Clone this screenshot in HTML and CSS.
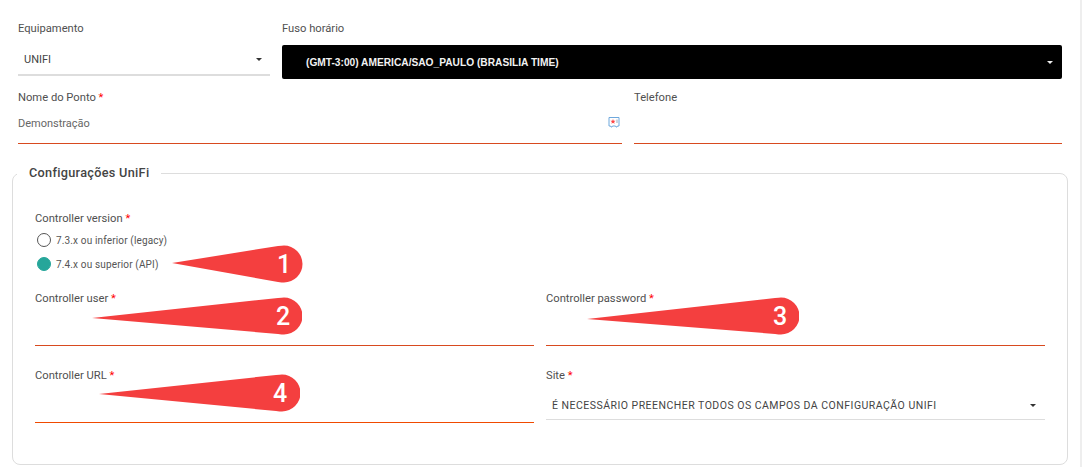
FILE: index.html
```html
<!DOCTYPE html>
<html lang="pt-BR">
<head>
    <meta charset="UTF-8">
    <title>Configurações UniFi</title>
    <link rel="stylesheet" href="styles.css">
</head>
<body>
    <div class="page">
        <div class="row row-top">
            <div class="field field-equip">
                <label>Equipamento</label>
                <div class="select">
                    <span>UNIFI</span>
                    <i class="caret"></i>
                </div>
            </div>
            <div class="field field-grow">
                <label>Fuso horário</label>
                <div class="select-dark">
                    <span>(GMT-3:00) AMERICA/SAO_PAULO (BRASILIA TIME)</span>
                    <i class="caret caret-white"></i>
                </div>
            </div>
        </div>

        <div class="row row-name">
            <div class="field field-name">
                <label>Nome do Ponto <b>*</b></label>
                <div class="input">
                    <span>Demonstração</span>
                    <svg class="card-icon" width="12" height="12" viewBox="0 0 12 12">
                        <path d="M1 1.5h10v8.5H9.5L9 11H8L7.5 10h-3L4 11H3L2.5 10H1z" fill="none" stroke="#6fa8dc" stroke-width="1"/>
                        <path d="M5 3l.7 1.7 1.8.1-1.4 1.2.5 1.8L5 6.8 3.4 7.8 3.9 6 2.5 4.8l1.8-.1z" fill="#f44"/>
                        <path d="M9 3.5v3.5" stroke="#9ab" stroke-width="1"/>
                    </svg>
                </div>
            </div>
            <div class="field field-grow">
                <label>Telefone</label>
                <div class="input"></div>
            </div>
        </div>

        <fieldset class="box">
            <legend>Configurações UniFi</legend>

            <div class="version">
                <label>Controller version <b>*</b></label>
                <div class="radio"><i class="dot"></i>7.3.x ou inferior (legacy)</div>
                <div class="radio"><i class="dot dot-on"></i>7.4.x ou superior (API)</div>
                <svg class="pin pin-1" width="131" height="38" viewBox="0 0 131 38">
                    <path d="M0 18L106 1Q110 .5 112 .5A18.5 18.5 0 0 1 112 37.5Q110 37.5 106 37z" fill="#f43f3f"/>
                    <text x="112" y="28" text-anchor="middle">1</text>
                </svg>
            </div>

            <div class="grid">
                <div class="field">
                    <label>Controller user <b>*</b></label>
                    <div class="input input-box"></div>
                    <svg class="pin pin-2" width="210" height="38" viewBox="0 0 210 38">
                        <path d="M0 21L186 1Q190 .5 192 .5A18.5 18.5 0 0 1 192 37.5Q190 37.5 186 37z" fill="#f43f3f"/>
                        <text x="191" y="28" text-anchor="middle">2</text>
                    </svg>
                </div>
                <div class="field">
                    <label>Controller password <b>*</b></label>
                    <div class="input input-box"></div>
                    <svg class="pin pin-3" width="212" height="38" viewBox="0 0 212 38">
                        <path d="M0 22L188 1Q192 .5 194 .5A18.5 18.5 0 0 1 194 37.5Q192 37.5 188 37z" fill="#f43f3f"/>
                        <text x="193" y="28" text-anchor="middle">3</text>
                    </svg>
                </div>
                <div class="field">
                    <label>Controller URL <b>*</b></label>
                    <div class="input input-box input-url"></div>
                    <svg class="pin pin-4" width="201" height="38" viewBox="0 0 201 38">
                        <path d="M0 20L177 1Q181 .5 183 .5A18.5 18.5 0 0 1 183 37.5Q181 37.5 177 37z" fill="#f43f3f"/>
                        <text x="181" y="28" text-anchor="middle">4</text>
                    </svg>
                </div>
                <div class="field">
                    <label>Site <b>*</b></label>
                    <div class="select select-site">
                        <span>É NECESSÁRIO PREENCHER TODOS OS CAMPOS DA CONFIGURAÇÃO UNIFI</span>
                        <i class="caret"></i>
                    </div>
                </div>
            </div>
        </fieldset>
    </div>
</body>
</html>
```

FILE: styles.css
```css
* {
    margin: 0;
    padding: 0;
    box-sizing: border-box;
}
html, body {
    height: 467px;
    overflow: hidden;
}
body {
    font-family: 'Roboto', 'Liberation Sans', sans-serif;
    background: #eee;
    color: #444;
}
.page {
    width: 1080px;
    height: 467px;
    background: #fff;
    padding: 22px 12px 0 18px;
}
.row {
    display: flex;
    gap: 12px;
}
.row-name {
    margin-top: 12px;
}
.field {
    position: relative;
    display: flex;
    flex-direction: column;
}
.field-equip {
    width: 252px;
}
.field-name {
    width: 604px;
}
.field-grow {
    flex: 1;
    padding-right: 6px;
}
label {
    font-size: 11.2px;
    line-height: 14px;
    color: #505050;
}
label b {
    color: #f00;
    font-weight: 400;
}
.select {
    height: 31px;
    margin-top: 9px;
    padding: 0 8px 0 6px;
    display: flex;
    justify-content: space-between;
    align-items: center;
    border-bottom: 2px solid #ddd;
    font-size: 11px;
    color: #444;
}
.select-dark {
    height: 34px;
    margin-top: 9px;
    padding: 0 9px 0 24px;
    display: flex;
    justify-content: space-between;
    align-items: center;
    background: #000;
    border-radius: 2px;
    color: #f2f2f2;
    font-family: 'Liberation Sans', sans-serif;
    font-size: 10.2px;
    font-weight: 700;
}
.caret {
    width: 0;
    height: 0;
    border-left: 3.5px solid transparent;
    border-right: 3.5px solid transparent;
    border-top: 3.5px solid #333;
}
.caret-white {
    border-top-color: #eee;
}
.input {
    height: 33px;
    margin-top: 6px;
    display: flex;
    justify-content: space-between;
    align-items: flex-start;
    padding-top: 6px;
    border-bottom: 1px solid #d84a1f;
    font-size: 11px;
    color: #666;
}
.card-icon {
    margin-right: 2px;
    margin-top: -1px;
}
.box {
    margin-top: 21px;
    width: 1056px;
    height: 300px;
    margin-left: -6px;
    padding: 0 22px;
    border: 1px solid #ddd;
    border-radius: 8px;
}
.box legend {
    margin-left: -18px;
    padding: 0 12px;
    font-size: 12.7px;
    font-weight: 500;
    line-height: 16px;
    letter-spacing: 0.3px;
    color: #444;
}
.version {
    position: relative;
    margin-top: 31px;
}
.version label {
    display: block;
    margin-bottom: 2px;
}
.radio {
    display: flex;
    align-items: center;
    gap: 5px;
    height: 24px;
    padding-left: 2px;
    font-size: 10px;
    letter-spacing: 0.15px;
    color: #555;
}
.dot {
    width: 14px;
    height: 14px;
    border: 1px solid #555;
    border-radius: 50%;
}
.dot-on {
    background: #26a69a;
    border-color: #26a69a;
}
.grid {
    display: grid;
    grid-template-columns: 499px 499px;
    column-gap: 12px;
    row-gap: 23px;
    margin-top: 16px;
}
.input-box {
    height: 34px;
}
.input-url {
    border-bottom-color: #f04a00;
}
.select-site {
    height: 31px;
    margin-top: 6px;
    padding: 3px 9.5px 0 6px;
    border-bottom-width: 1px;
    font-size: 10.5px;
    letter-spacing: 0.48px;
}
.pin {
    position: absolute;
}
.pin text {
    fill: #fff;
    font-family: 'Roboto', sans-serif;
    font-size: 25px;
    font-weight: 500;
}
.pin-1 {
    left: 137px;
    top: 33px;
}
.pin-2 {
    left: 57px;
    top: 5px;
}
.pin-3 {
    left: 41px;
    top: 5px;
}
.pin-4 {
    left: 64px;
    top: 5px;
}
```
